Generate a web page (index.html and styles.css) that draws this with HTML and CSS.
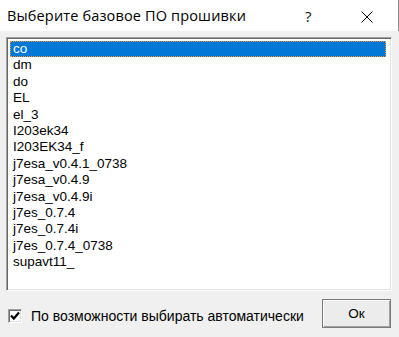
FILE: index.html
```html
<!DOCTYPE html>
<html>
<head>
<meta charset="utf-8">
<link rel="stylesheet" href="styles.css">
</head>
<body>
<div class="window">
  <div class="titlebar">
    <span class="title">Выберите базовое ПО прошивки</span>
    <span class="help">?</span>
    <span class="close"><svg width="12" height="12" viewBox="0 0 12 12"><path d="M0.5 0.5 L11.5 11.5 M11.5 0.5 L0.5 11.5" stroke="#000" stroke-width="1" fill="none"/></svg></span>
  </div>
  <div class="body">
    <div class="listbox">
      <div class="item selected">co</div>
      <div class="item">dm</div>
      <div class="item">do</div>
      <div class="item">EL</div>
      <div class="item">el_3</div>
      <div class="item">I203ek34</div>
      <div class="item">I203EK34_f</div>
      <div class="item">j7esa_v0.4.1_0738</div>
      <div class="item">j7esa_v0.4.9</div>
      <div class="item">j7esa_v0.4.9i</div>
      <div class="item">j7es_0.7.4</div>
      <div class="item">j7es_0.7.4i</div>
      <div class="item">j7es_0.7.4_0738</div>
      <div class="item">supavt11_</div>
    </div>
    <div class="footer">
      <label class="check">
        <span class="box"><svg width="10" height="10" viewBox="0 0 10 10"><path d="M1 4.5 L3.8 7.5 L9 1.5" stroke="#000" stroke-width="2.2" fill="none"/></svg></span>
        <span class="label">По возможности выбирать автоматически</span>
      </label>
      <div class="btn">Ок</div>
    </div>
  </div>
</div>
</body>
</html>
```
FILE: styles.css
```css
* { box-sizing: border-box; }
html, body { margin: 0; padding: 0; }
body { width: 399px; height: 337px; overflow: hidden; background: #f0f0f0; }
.window {
  width: 399px;
  height: 337px;
  display: flex;
  flex-direction: column;
  background: #f0f0f0;
}
.titlebar {
  height: 31px;
  flex: none;
  background: #fff;
  display: flex;
  align-items: center;
  border-right: 1px solid #8c8c8c;
  font-family: "Open Sans", "Noto Sans", sans-serif;
  color: #000;
}
.title {
  font-size: 14.5px;
  padding-left: 7px;
  flex: 1;
  letter-spacing: 0.15px;
}
.help {
  font-size: 15px;
  width: 20px;
  margin-right: 36px;
  color: #111;
}
.close {
  width: 12px;
  height: 12px;
  margin-right: 25px;
  margin-top: 2px;
  display: flex;
}
.body {
  flex: 1;
  display: flex;
  flex-direction: column;
  padding: 6px 7px 0 6px;
}
.listbox {
  height: 254px;
  background: #fff;
  border-top: 1px solid #a0a0a0;
  border-left: 1px solid #a0a0a0;
  border-right: 1px solid #fff;
  border-bottom: 1px solid #fff;
  box-shadow: inset 1px 1px 0 #696969, inset -1px -1px 0 #e3e3e3;
  padding: 3px 5px 0 3px;
  font-family: "Liberation Sans", Arial, sans-serif;
  font-size: 13.5px;
  color: #000;
}
.item {
  height: 16.4px;
  line-height: 16.4px;
  padding-left: 3px;
  white-space: nowrap;
}
.item.selected {
  background: #0078d7;
  color: #fff;
  outline: 1px dotted #f09030;
  outline-offset: -1px;
}
.footer {
  display: flex;
  align-items: center;
  justify-content: space-between;
  margin-top: 8px;
  height: 29px;
}
.check {
  display: flex;
  align-items: center;
  font-family: "Liberation Sans", Arial, sans-serif;
  font-size: 14px;
  color: #000;
  margin-left: 2px;
  margin-top: 5px;
}
.box {
  width: 14px;
  height: 14px;
  background: #fff;
  border-top: 1px solid #a0a0a0;
  border-left: 1px solid #a0a0a0;
  border-right: 1px solid #fff;
  border-bottom: 1px solid #fff;
  box-shadow: inset 1px 1px 0 #696969, inset -1px -1px 0 #e3e3e3;
  display: flex;
  align-items: center;
  justify-content: center;
  margin-right: 9px;
}
.btn {
  width: 69px;
  height: 29px;
  border: 1px solid #7a7a7a;
  box-shadow: inset 1px 1px 0 #fff, inset -1px -1px 0 #a0a0a0;
  background: #ececec;
  display: flex;
  align-items: center;
  justify-content: center;
  font-family: "Liberation Sans", Arial, sans-serif;
  font-size: 13.5px;
  color: #000;
  margin-right: 1px;
}
```
